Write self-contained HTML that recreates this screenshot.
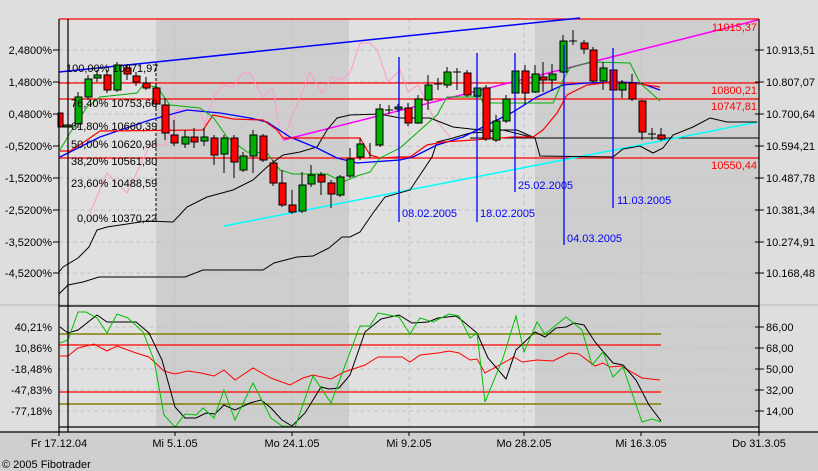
<!DOCTYPE html>
<html><head><meta charset="utf-8"><style>
html,body{margin:0;padding:0;background:#dcdcdc;}
svg{display:block;font-family:"Liberation Sans",sans-serif;font-size:11px;}
</style></head><body>
<svg width="818" height="471" viewBox="0 0 818 471" xmlns="http://www.w3.org/2000/svg">
<rect x="0" y="0" width="818" height="471" fill="#dedede"/>
<rect x="0" y="432" width="818" height="39" fill="#cfcfcf"/>
<!-- bands top -->
<rect x="59" y="19" width="97" height="287" fill="#e0e0e0"/>
<rect x="156" y="19" width="193" height="287" fill="#cecece"/>
<rect x="349" y="19" width="186" height="287" fill="#e0e0e0"/>
<rect x="535" y="19" width="224" height="287" fill="#cecece"/>
<rect x="0" y="304" width="818" height="2" fill="#cacaca"/>
<!-- bands bottom -->
<rect x="59" y="306" width="97" height="121" fill="#e0e0e0"/>
<rect x="156" y="306" width="193" height="121" fill="#cecece"/>
<rect x="349" y="306" width="186" height="121" fill="#e0e0e0"/>
<rect x="535" y="306" width="224" height="121" fill="#cecece"/>
<!-- grid -->
<g stroke="#c4c4c4" stroke-dasharray="4,3" stroke-width="1">
<line x1="59" y1="50" x2="759" y2="50"/><line x1="59" y1="82" x2="759" y2="82"/><line x1="59" y1="114" x2="759" y2="114"/><line x1="59" y1="146" x2="759" y2="146"/><line x1="59" y1="178" x2="759" y2="178"/><line x1="59" y1="210" x2="759" y2="210"/><line x1="59" y1="242" x2="759" y2="242"/><line x1="59" y1="273" x2="759" y2="273"/>
<line x1="59" y1="327" x2="759" y2="327"/><line x1="59" y1="348" x2="759" y2="348"/><line x1="59" y1="369" x2="759" y2="369"/><line x1="59" y1="390" x2="759" y2="390"/><line x1="59" y1="411" x2="759" y2="411"/>
<line x1="175" y1="19" x2="175" y2="427"/><line x1="292" y1="19" x2="292" y2="427"/><line x1="409" y1="19" x2="409" y2="427"/><line x1="524" y1="19" x2="524" y2="427"/><line x1="641" y1="19" x2="641" y2="427"/>
</g>
<!-- fib lines -->
<g stroke="#ff0000" stroke-width="1.3">
<line x1="59" y1="19" x2="759" y2="19"/><line x1="59" y1="83" x2="759" y2="83"/><line x1="59" y1="99" x2="759" y2="99"/><line x1="59" y1="158" x2="759" y2="158"/>
</g>
<line x1="470" y1="138" x2="759" y2="138" stroke="#000"/>
<line x1="156" y1="63" x2="156" y2="221" stroke="#000" stroke-dasharray="3,2"/>
<!-- trend lines -->
<line x1="59" y1="72" x2="580" y2="18" stroke="#0000ff" stroke-width="1.5"/>
<line x1="283" y1="140" x2="758" y2="20" stroke="#ff00ff" stroke-width="1.5"/>
<line x1="224" y1="226" x2="758" y2="122" stroke="#00ffff" stroke-width="1.5"/>
<!-- pink -->
<polyline fill="none" stroke="#ff99cc" points="90,213 107,173 127,193 150,145 165,145 177,110 200,110 205,125 213,98 223,85 233,87 243,73 250,73 263,97 273,88 280,133 283,140 310,72 322,93 332,77 340,80 350,73 360,43 370,43 377,50 388,82 400,70 408,92 418,85 427,103 432,115 450,137"/>
<!-- bollinger -->
<g fill="none" stroke="#000" stroke-width="1">
<polyline points="59,294 68,285 83,282 99,277 185,277 203,270 263,270 274,263 297,257 313,256 329,248 342,237 350,237 360,232 373,213 385,197 410,190 432,157 437,142 453,138 470,133 487,132 503,130 517,130 535,138 540,156 613,157 623,149 640,146 653,153 663,148 673,135 693,127 710,118 727,122 757,122"/>
<polyline points="59,272 63,267 78,258 89,247 97,230 107,227 147,221 173,222 187,207 207,197 233,190 253,180 267,167 283,155 300,152 317,147 327,130 337,118 350,115 380,114 400,118 430,118 453,127 480,130 503,130 535,138"/>
</g>
<polyline fill="none" stroke="#0000ff" stroke-width="1.3" points="60,157 100,137 150,120 187,110 220,113 250,118 267,122 290,137 317,148 337,158 357,163 400,160 413,157 437,145 463,137 487,125 513,112 537,97 563,85 587,83 620,82 640,83 660,90"/>
<polyline fill="none" stroke="#ff0000" stroke-width="1.2" points="60,151 70,151 87,140 100,131 203,130 213,115 233,119 263,120 277,130 283,138 360,138 370,155 380,158 400,157 410,157 427,145 443,142 473,140 513,137 533,137 543,130 557,113 567,95 587,85 613,82 640,84 660,87"/>
<polyline fill="none" stroke="#00b000" stroke-width="1" points="60,150 70,133 87,107 100,97 137,93 143,85 157,87 170,105 200,108 213,117 227,137 247,152 267,153 280,170 293,174 327,174 343,182 357,176 370,172 380,158 400,148 437,115 447,97 480,97 483,103 553,103 563,80 570,68 590,62 630,63 640,83 660,101"/>
<!-- candles -->
<g stroke="#000" stroke-width="1">
<line x1="78" y1="92" x2="78" y2="128"/><line x1="88" y1="75" x2="88" y2="100"/><line x1="97" y1="70" x2="97" y2="82"/><line x1="107" y1="70" x2="107" y2="93"/><line x1="117" y1="62" x2="117" y2="92"/><line x1="127" y1="64" x2="127" y2="80"/><line x1="136" y1="72" x2="136" y2="86"/><line x1="146" y1="77" x2="146" y2="90"/><line x1="156" y1="86" x2="156" y2="110"/>
<line x1="165" y1="98" x2="165" y2="140"/><line x1="174" y1="120" x2="174" y2="146"/><line x1="185" y1="130" x2="185" y2="148"/><line x1="194" y1="128" x2="194" y2="148"/><line x1="204" y1="128" x2="204" y2="146"/><line x1="214" y1="135" x2="214" y2="165"/><line x1="224" y1="135" x2="224" y2="173"/><line x1="234" y1="135" x2="234" y2="178"/><line x1="243" y1="152" x2="243" y2="172"/><line x1="253" y1="130" x2="253" y2="173"/><line x1="263" y1="134" x2="263" y2="162"/><line x1="273" y1="160" x2="273" y2="186"/><line x1="282" y1="170" x2="282" y2="207"/><line x1="292" y1="190" x2="292" y2="214"/><line x1="302" y1="172" x2="302" y2="213"/><line x1="311" y1="165" x2="311" y2="187"/><line x1="321" y1="172" x2="321" y2="195"/><line x1="331" y1="180" x2="331" y2="208"/><line x1="340" y1="175" x2="340" y2="197"/><line x1="350" y1="148" x2="350" y2="178"/><line x1="360" y1="138" x2="360" y2="160"/><line x1="370" y1="143" x2="370" y2="158"/><line x1="380" y1="104" x2="380" y2="147"/><line x1="389" y1="105" x2="389" y2="114"/><line x1="398" y1="104" x2="398" y2="112"/><line x1="408" y1="103" x2="408" y2="126"/><line x1="418" y1="95" x2="418" y2="124"/><line x1="428" y1="75" x2="428" y2="110"/><line x1="438" y1="78" x2="438" y2="90"/><line x1="447" y1="67" x2="447" y2="88"/><line x1="457" y1="68" x2="457" y2="90"/><line x1="467" y1="70" x2="467" y2="97"/><line x1="477" y1="85" x2="477" y2="100"/><line x1="486" y1="85" x2="486" y2="141"/><line x1="496" y1="115" x2="496" y2="142"/><line x1="506" y1="95" x2="506" y2="123"/><line x1="515" y1="67" x2="515" y2="96"/><line x1="525" y1="65" x2="525" y2="104"/><line x1="535" y1="65" x2="535" y2="93"/><line x1="543" y1="62" x2="543" y2="92"/><line x1="552" y1="64" x2="552" y2="91"/><line x1="563" y1="35" x2="563" y2="73"/><line x1="573" y1="30" x2="573" y2="45"/><line x1="584" y1="40" x2="584" y2="54"/><line x1="593" y1="47" x2="593" y2="83"/><line x1="603" y1="62" x2="603" y2="90"/><line x1="613" y1="67" x2="613" y2="91"/><line x1="622" y1="80" x2="622" y2="98"/><line x1="632" y1="74" x2="632" y2="101"/><line x1="642" y1="100" x2="642" y2="140"/><line x1="652" y1="128" x2="652" y2="140"/><line x1="661" y1="128" x2="661" y2="141"/>
<line x1="385" y1="110" x2="393" y2="110"/><line x1="434" y1="84" x2="442" y2="84"/><line x1="453" y1="72" x2="461" y2="72"/><line x1="569" y1="41" x2="577" y2="41"/><line x1="648" y1="134" x2="656" y2="134"/>
</g>
<g stroke="#000" stroke-width="1">
<rect x="58" y="113" width="5" height="14" fill="#ff0000"/>
<rect x="64" y="125" width="7" height="2" fill="#00b000"/>
<rect x="75" y="97" width="7" height="27" fill="#00b000"/>
<rect x="85" y="79" width="7" height="18" fill="#00b000"/>
<rect x="94" y="75" width="7" height="3" fill="#00b000"/>
<rect x="104" y="75" width="7" height="15" fill="#ff0000"/>
<rect x="114" y="65" width="7" height="25" fill="#00b000"/>
<rect x="124" y="68" width="7" height="6" fill="#ff0000"/>
<rect x="133" y="76" width="7" height="6" fill="#ff0000"/>
<rect x="143" y="83" width="7" height="5" fill="#ff0000"/>
<rect x="153" y="88" width="7" height="16" fill="#ff0000"/>
<rect x="162" y="105" width="7" height="28" fill="#ff0000"/>
<rect x="171" y="135" width="7" height="8" fill="#ff0000"/>
<rect x="182" y="137" width="7" height="7" fill="#00b000"/>
<rect x="191" y="137" width="7" height="5" fill="#ff0000"/>
<rect x="201" y="137" width="7" height="4" fill="#00b000"/>
<rect x="211" y="138" width="7" height="17" fill="#ff0000"/>
<rect x="221" y="138" width="7" height="16" fill="#00b000"/>
<rect x="231" y="138" width="7" height="24" fill="#ff0000"/>
<rect x="240" y="156" width="7" height="14" fill="#00b000"/>
<rect x="250" y="135" width="7" height="21" fill="#00b000"/>
<rect x="260" y="136" width="7" height="24" fill="#ff0000"/>
<rect x="270" y="163" width="7" height="20" fill="#ff0000"/>
<rect x="279" y="183" width="7" height="22" fill="#ff0000"/>
<rect x="289" y="205" width="7" height="7" fill="#ff0000"/>
<rect x="299" y="185" width="7" height="26" fill="#00b000"/>
<rect x="308" y="175" width="7" height="9" fill="#00b000"/>
<rect x="318" y="175" width="7" height="7" fill="#ff0000"/>
<rect x="328" y="183" width="7" height="11" fill="#ff0000"/>
<rect x="337" y="177" width="7" height="18" fill="#00b000"/>
<rect x="347" y="159" width="7" height="17" fill="#00b000"/>
<rect x="357" y="144" width="7" height="13" fill="#00b000"/>
<rect x="376" y="109" width="7" height="36" fill="#00b000"/>
<rect x="395" y="107" width="7" height="2" fill="#00b000"/>
<rect x="405" y="108" width="7" height="15" fill="#ff0000"/>
<rect x="415" y="99" width="7" height="24" fill="#00b000"/>
<rect x="425" y="85" width="7" height="15" fill="#00b000"/>
<rect x="444" y="72" width="7" height="13" fill="#00b000"/>
<rect x="464" y="73" width="7" height="22" fill="#ff0000"/>
<rect x="474" y="88" width="7" height="8" fill="#00b000"/>
<rect x="483" y="88" width="7" height="51" fill="#ff0000"/>
<rect x="493" y="121" width="7" height="19" fill="#00b000"/>
<rect x="503" y="99" width="7" height="22" fill="#00b000"/>
<rect x="512" y="71" width="7" height="22" fill="#00b000"/>
<rect x="522" y="71" width="7" height="22" fill="#ff0000"/>
<rect x="532" y="74" width="7" height="18" fill="#00b000"/>
<rect x="540" y="77" width="7" height="3" fill="#ff0000"/>
<rect x="549" y="74" width="7" height="6" fill="#00b000"/>
<rect x="560" y="41" width="7" height="31" fill="#00b000"/>
<rect x="581" y="43" width="7" height="6" fill="#ff0000"/>
<rect x="590" y="50" width="7" height="31" fill="#ff0000"/>
<rect x="600" y="68" width="7" height="13" fill="#00b000"/>
<rect x="610" y="70" width="7" height="20" fill="#ff0000"/>
<rect x="619" y="83" width="7" height="7" fill="#00b000"/>
<rect x="629" y="83" width="7" height="16" fill="#ff0000"/>
<rect x="639" y="101" width="7" height="31" fill="#ff0000"/>
<rect x="658" y="135" width="7" height="4" fill="#ff0000"/>
</g>
<!-- blue date lines -->
<g stroke="#0000ff" stroke-width="1.3">
<line x1="399" y1="57" x2="399" y2="222"/><line x1="477" y1="53" x2="477" y2="222"/><line x1="515" y1="53" x2="515" y2="192"/><line x1="564" y1="45" x2="564" y2="245"/><line x1="613" y1="48" x2="613" y2="208"/>
</g>
<g fill="#0000ff">
<text x="402" y="217">08.02.2005</text><text x="480" y="217">18.02.2005</text><text x="518" y="189">25.02.2005</text><text x="567" y="242">04.03.2005</text><text x="617" y="204">11.03.2005</text>
</g>
<!-- fib labels -->
<g fill="#000">
<text x="66" y="72">100,00% 10871,97</text>
<text x="71" y="107">76,40% 10753,60</text>
<text x="71" y="130">61,80% 10660,39</text>
<text x="71" y="148">50,00% 10620,98</text>
<text x="71" y="165">38,20% 10561,80</text>
<text x="71" y="187">23,60% 10488,59</text>
<text x="77" y="222">0,00% 10370,22</text>
</g>
<g fill="#ff0000" text-anchor="end">
<text x="757" y="31">11015,37</text><text x="757" y="94">10800,21</text><text x="757" y="110">10747,81</text><text x="757" y="169">10550,44</text>
</g>
<!-- lower panel lines -->
<g stroke-width="1">
<line x1="59" y1="334" x2="661" y2="334" stroke="#808000" stroke-width="1.5"/>
<line x1="59" y1="345" x2="661" y2="345" stroke="#ff0000" stroke-width="1.3"/>
<line x1="59" y1="392" x2="661" y2="392" stroke="#ff0000" stroke-width="1.3"/>
<line x1="59" y1="404" x2="661" y2="404" stroke="#808000" stroke-width="1.5"/>
</g>
<polyline fill="none" stroke="#ff0000" points="60,356 68,356 78,348 94,344 107,351 117,346 136,353 149,357 164,371 175,374 188,371 201,373 214,376 224,370 235,380 253,368 271,378 290,385 303,378 313,375 331,379 344,372 365,365 378,357 402,357 410,362 420,355 438,353 449,351 459,353 470,360 477,359 485,373 514,357 522,362 537,360 553,361 569,353 579,354 595,366 603,363 610,367 621,366 642,378 660,380"/>
<polyline fill="none" stroke="#000" points="60,327 68,333 78,330 97,315 107,322 130,322 136,322 149,333 162,360 175,407 185,418 196,418 206,413 215,414 224,405 235,410 250,403 261,400 271,408 282,420 292,426 305,413 313,400 321,387 329,389 339,388 350,375 365,332 381,319 399,315 412,323 428,322 438,318 456,316 464,322 477,333 488,358 506,379 516,350 535,332 545,337 556,328 566,327 574,323 584,325 595,342 613,363 623,365 636,380 649,405 661,421"/>
<polyline fill="none" stroke="#00c000" points="60,343 68,340 78,312 86,312 97,318 107,333 117,314 128,318 143,332 154,360 164,415 175,427 185,414 196,415 203,408 214,418 224,390 235,420 253,383 271,418 282,426 295,427 313,376 331,403 352,347 360,326 370,326 378,313 399,317 410,334 420,318 433,322 449,314 459,316 470,338 477,333 485,402 503,358 516,316 524,352 537,322 545,334 566,317 582,330 592,365 603,352 613,377 623,367 642,422 652,419 661,422"/>
<!-- frame -->
<g stroke="#000" stroke-width="1.2">
<line x1="59" y1="19" x2="59" y2="432"/><line x1="68" y1="19" x2="68" y2="432"/>
<line x1="759" y1="19" x2="759" y2="432"/>
<line x1="59" y1="306" x2="759" y2="306"/><line x1="59" y1="427" x2="759" y2="427"/>
<line x1="0" y1="432" x2="818" y2="432"/>
</g>
<g stroke="#000">
<line x1="53" y1="50" x2="59" y2="50"/><line x1="53" y1="82" x2="59" y2="82"/><line x1="53" y1="114" x2="59" y2="114"/><line x1="53" y1="146" x2="59" y2="146"/><line x1="53" y1="178" x2="59" y2="178"/><line x1="53" y1="210" x2="59" y2="210"/><line x1="53" y1="242" x2="59" y2="242"/><line x1="53" y1="273" x2="59" y2="273"/>
<line x1="755" y1="50" x2="764" y2="50"/><line x1="755" y1="82" x2="764" y2="82"/><line x1="755" y1="114" x2="764" y2="114"/><line x1="755" y1="146" x2="764" y2="146"/><line x1="755" y1="178" x2="764" y2="178"/><line x1="755" y1="210" x2="764" y2="210"/><line x1="755" y1="242" x2="764" y2="242"/><line x1="755" y1="273" x2="764" y2="273"/>
<line x1="755" y1="327" x2="764" y2="327"/><line x1="755" y1="348" x2="764" y2="348"/><line x1="755" y1="369" x2="764" y2="369"/><line x1="755" y1="390" x2="764" y2="390"/><line x1="755" y1="411" x2="764" y2="411"/>
<line x1="59" y1="432" x2="59" y2="436"/><line x1="175" y1="432" x2="175" y2="436"/><line x1="292" y1="432" x2="292" y2="436"/><line x1="409" y1="432" x2="409" y2="436"/><line x1="524" y1="432" x2="524" y2="436"/><line x1="641" y1="432" x2="641" y2="436"/><line x1="759" y1="432" x2="759" y2="436"/>
</g>
<g fill="#000" text-anchor="end">
<text x="52" y="54">2,4800%</text><text x="52" y="86">1,4800%</text><text x="52" y="118">0,4800%</text><text x="52" y="150">-0,5200%</text><text x="52" y="182">-1,5200%</text><text x="52" y="214">-2,5200%</text><text x="52" y="246">-3,5200%</text><text x="52" y="277">-4,5200%</text>
<text x="52" y="331">40,21%</text><text x="52" y="352">10,86%</text><text x="52" y="373">-18,48%</text><text x="52" y="394">-47,83%</text><text x="52" y="415">-77,18%</text>
</g>
<g fill="#000">
<text x="766" y="54">10.913,51</text><text x="766" y="86">10.807,07</text><text x="766" y="118">10.700,64</text><text x="766" y="150">10.594,21</text><text x="766" y="182">10.487,78</text><text x="766" y="214">10.381,34</text><text x="766" y="246">10.274,91</text><text x="766" y="277">10.168,48</text>
<text x="766" y="331">86,00</text><text x="766" y="352">68,00</text><text x="766" y="373">50,00</text><text x="766" y="394">32,00</text><text x="766" y="415">14,00</text>
</g>
<g fill="#000" text-anchor="middle">
<text x="59" y="447">Fr 17.12.04</text><text x="175" y="447">Mi 5.1.05</text><text x="292" y="447">Mo 24.1.05</text><text x="409" y="447">Mi 9.2.05</text><text x="524" y="447">Mo 28.2.05</text><text x="641" y="447">Mi 16.3.05</text><text x="759" y="447">Do 31.3.05</text>
</g>
<text x="2" y="468" fill="#000">© 2005 Fibotrader</text>
</svg>
</body></html>
